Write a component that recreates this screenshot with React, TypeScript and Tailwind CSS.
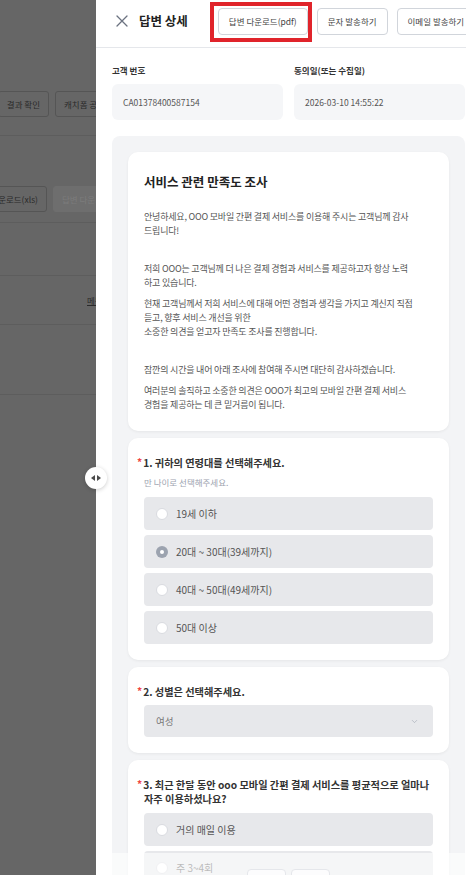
import { ChevronDown } from 'lucide-react';

const font = { fontFamily: '"Noto Sans CJK KR", "Noto Sans", sans-serif' };

// each entry is one paragraph, split into its display lines; null = empty spacer paragraph
const intro: (string[] | null)[] = [
  ['안녕하세요, OOO 모바일 간편 결제 서비스를 이용해 주시는 고객님께 감사', '드립니다!'],
  null,
  ['저희 OOO는 고객님께 더 나은 결제 경험과 서비스를 제공하고자 항상 노력', '하고 있습니다.'],
  ['현재 고객님께서 저희 서비스에 대해 어떤 경험과 생각을 가지고 계신지 직접', '듣고, 향후 서비스 개선을 위한', '소중한 의견을 얻고자 만족도 조사를 진행합니다.'],
  null,
  ['잠깐의 시간을 내어 아래 조사에 참여해 주시면 대단히 감사하겠습니다.'],
  ['여러분의 솔직하고 소중한 의견은 OOO가 최고의 모바일 간편 결제 서비스', '경험을 제공하는 데 큰 밑거름이 됩니다.'],
];

const ageOptions = ['19세 이하', '20대 ~ 30대(39세까지)', '40대 ~ 50대(49세까지)', '50대 이상'];

function Radio({ checked }: { checked?: boolean }) {
  if (checked) {
    return (
      <span className="w-[12px] h-[12px] rounded-full bg-[#9ca3af] flex items-center justify-center shrink-0">
        <span className="w-[4px] h-[4px] rounded-full bg-white" />
      </span>
    );
  }
  return <span className="w-[12px] h-[12px] rounded-full bg-white border border-[#d9dbe0] shrink-0" />;
}

function Option({ label, checked }: { label: string; checked?: boolean }) {
  return (
    <div className="h-[33px] rounded-[4px] bg-[#e7e8eb] flex items-center pl-[12px] gap-[8px]">
      <Radio checked={checked} />
      <span className="text-[10px] text-[#555]">{label}</span>
    </div>
  );
}

function QuestionTitle({ children }: { children: React.ReactNode }) {
  return (
    <div className="text-[10.2px] leading-[14px] font-bold text-[#333]">
      <span className="text-[#ef4444] -ml-[7px] mr-[1px] relative -top-[1px]">*</span>
      {children}
    </div>
  );
}

function Card({ children, className = '' }: { children: React.ReactNode; className?: string }) {
  return (
    <div className={`bg-white rounded-[10px] shadow-[0_1px_3px_rgba(0,0,0,0.06)] px-[16px] ${className}`}>
      {children}
    </div>
  );
}

export default function App() {
  return (
    <div className="w-[466px] h-[875px] overflow-hidden flex relative" style={font}>
      {/* dimmed page behind the drawer */}
      <div className="w-[96px] shrink-0 bg-[#666666] overflow-hidden">
        <div className="w-[160px] pt-[91px] text-[8.5px] text-[#2a2a2a]">
          <div className="flex gap-[6px]">
            <div className="w-[49px] flex justify-end shrink-0">
              <div className="h-[26px] px-[8px] border border-[#555] rounded-[3px] flex items-center whitespace-nowrap shrink-0">결과 확인</div>
            </div>
            <div className="h-[26px] px-[8px] border border-[#555] rounded-[3px] flex items-center whitespace-nowrap shrink-0">캐치폼 공유</div>
          </div>
          <div className="h-px bg-[#5d5d5d] mt-[18px]" />
          <div className="flex gap-[6px] mt-[50px]">
            <div className="w-[47px] flex justify-end shrink-0">
              <div className="h-[26px] px-[8px] border border-[#555] rounded-[3px] flex items-center whitespace-nowrap shrink-0">답변 다운로드(xls)</div>
            </div>
            <div className="h-[26px] px-[8px] border border-[#6e6e6e] bg-[#6e6e6e] rounded-[3px] flex items-center whitespace-nowrap shrink-0 text-[#7c7c7c]">답변 다운로드(pdf)</div>
          </div>
          <div className="h-px bg-[#5d5d5d] mt-[10px]" />
          <div className="h-px bg-[#5d5d5d] mt-[52px]" />
          <div className="pl-[87px] mt-[18px] leading-[12px]">
            <span className="underline text-[#2a2a2a]">메뉴</span>
          </div>
          <div className="h-px bg-[#5d5d5d] mt-[18px]" />
          <div className="h-px bg-[#5d5d5d] mt-[69px]" />
        </div>
      </div>

      {/* drawer resize handle */}
      <div className="absolute left-[85px] top-[467px] w-[22px] h-[22px] rounded-full bg-white shadow-[0_1px_4px_rgba(0,0,0,0.2)] flex items-center justify-center z-10">
        <svg width="10" height="6" viewBox="0 0 10 6">
          <polygon points="0,3 4,0 4,6" fill="#4b4b4b" />
          <polygon points="10,3 6,0 6,6" fill="#4b4b4b" />
        </svg>
      </div>

      {/* drawer */}
      <div className="w-[385px] shrink-0 bg-white flex flex-col relative">
        <div className="h-[48px] pb-[5px] pl-[20px] flex items-center border-b border-[#e5e7eb] shrink-0">
          <svg width="12" height="12" viewBox="0 0 12 12" className="shrink-0">
            <path d="M1 1L11 11M11 1L1 11" stroke="#6b7280" strokeWidth="1.3" strokeLinecap="round" />
          </svg>
          <span className="ml-[11px] text-[12.5px] font-bold text-[#222] whitespace-nowrap">답변 상세</span>
          <div className="ml-[30px] flex gap-[9px] text-[8.5px] text-[#444]">
            <div className="relative shrink-0">
              <div className="h-[27px] px-[10px] border border-[#d1d5db] rounded-[4px] flex items-center whitespace-nowrap">답변 다운로드(pdf)</div>
              <div className="absolute -left-[8px] -right-[4px] -top-[6px] -bottom-[7px] border-[4px] border-[#e0242b]" />
            </div>
            <div className="h-[27px] px-[10px] border border-[#d1d5db] rounded-[4px] flex items-center whitespace-nowrap shrink-0">문자 발송하기</div>
            <div className="h-[27px] px-[10px] border border-[#d1d5db] rounded-[4px] flex items-center whitespace-nowrap shrink-0">이메일 발송하기</div>
          </div>
        </div>

        <div className="px-[16px] pt-[16px] flex flex-col flex-1 min-h-0">
          <div className="grid grid-cols-2 gap-[11px]">
            <div>
              <div className="text-[8.5px] leading-[12px] font-bold text-[#333]">고객 번호</div>
              <div className="mt-[8px] h-[36px] rounded-[6px] bg-[#f5f6f8] px-[11px] flex items-center text-[8.5px] text-[#555]">CA01378400587154</div>
            </div>
            <div>
              <div className="text-[8.5px] leading-[12px] font-bold text-[#333]">동의일(또는 수집일)</div>
              <div className="mt-[8px] h-[36px] rounded-[6px] bg-[#f5f6f8] px-[11px] flex items-center text-[8.5px] text-[#555]">2026-03-10 14:55:22</div>
            </div>
          </div>

          <div className="mt-[16px] flex-1 bg-[#f3f4f6] rounded-t-[8px] p-[16px] pb-0 flex flex-col gap-[7px]">
            <Card className="pt-[21px] pb-[19px]">
              <div className="text-[12.5px] leading-[18px] font-bold text-[#222] mb-[19px]">서비스 관련 만족도 조사</div>
              <div className="flex flex-col gap-[7px] text-[9px] leading-[14px] tracking-[-0.2px] text-[#555]">
                {intro.map((para, i) =>
                  para === null ? (
                    <div key={i} className="h-[10px]" />
                  ) : (
                    <p key={i}>
                      {para.map((line) => (
                        <span key={line} className="block whitespace-nowrap">{line}</span>
                      ))}
                    </p>
                  ),
                )}
              </div>
            </Card>

            <Card className="pt-[18px] pb-[16px]">
              <QuestionTitle>1. 귀하의 연령대를 선택해주세요.</QuestionTitle>
              <div className="mt-[5px] text-[8.5px] leading-[15px] text-[#9ca3af]">만 나이로 선택해주세요.</div>
              <div className="mt-[7px] flex flex-col gap-[5px]">
                {ageOptions.map((o, i) => (
                  <Option key={o} label={o} checked={i === 1} />
                ))}
              </div>
            </Card>

            <Card className="pt-[18px] pb-[16px]">
              <QuestionTitle>2. 성별은 선택해주세요.</QuestionTitle>
              <div className="mt-[6px] h-[32px] rounded-[4px] bg-[#e7e8eb] flex items-center justify-between pl-[12px] pr-[14px]">
                <span className="text-[9.5px] text-[#777]">여성</span>
                <ChevronDown size={9} strokeWidth={1.5} color="#9ca3af" />
              </div>
            </Card>

            <Card className="pt-[18px] pb-[16px]">
              <QuestionTitle>3. 최근 한달 동안 ooo 모바일 간편 결제 서비스를 평균적으로 얼마나 자주 이용하셨나요?</QuestionTitle>
              <div className="mt-[7px] flex flex-col gap-[5px]">
                <Option label="거의 매일 이용" />
                <Option label="주 3~4회" />
                <Option label="주 1~2회" />
              </div>
            </Card>
          </div>
        </div>

        {/* sticky footer fading over the list */}
        <div className="absolute left-[16px] right-0 bottom-0 h-[22px] bg-white/60 flex justify-start pl-[135px] gap-[5px] pt-[16px]">
          <div className="w-[39px] h-[20px] rounded-[4px] border border-[#e5e7eb] bg-white/70" />
          <div className="w-[39px] h-[20px] rounded-[4px] border border-[#e5e7eb] bg-white/70" />
        </div>
      </div>
    </div>
  );
}
